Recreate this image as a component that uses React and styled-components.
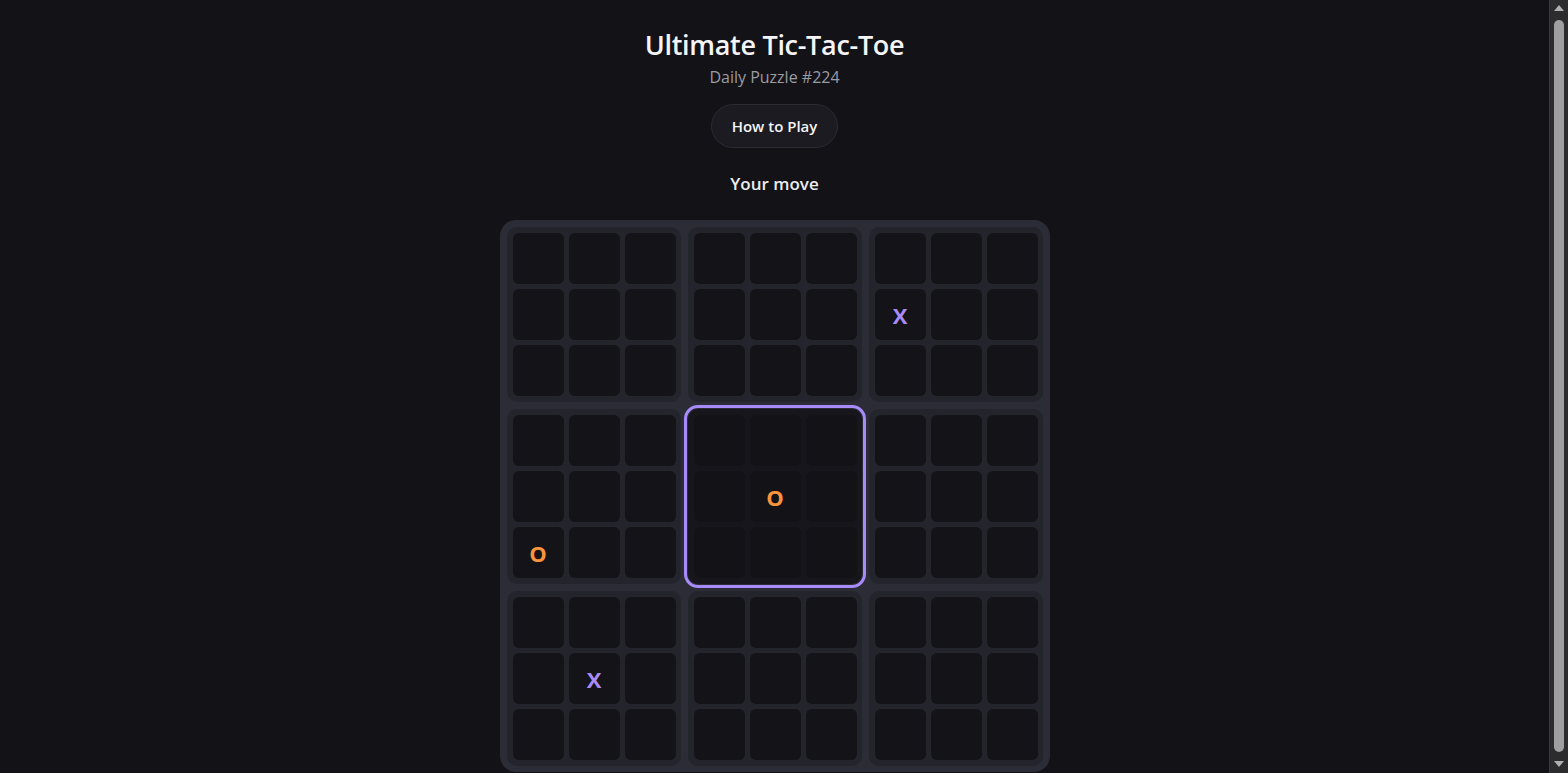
import React from "react";
import styled, { createGlobalStyle } from "styled-components";

const Global = createGlobalStyle`
  html {
    color-scheme: dark;
    background: #121217;
  }
  body {
    margin: 0;
    background: #121217;
    color: #f3f4f6;
    font-family: "Open Sans", "Noto Sans", sans-serif;
    overflow: hidden;
  }
`;

const Shell = styled.div`
  display: flex;
  height: 100vh;
`;

const Main = styled.main`
  flex: 1;
  overflow-y: auto;
  scrollbar-width: none;
  &::-webkit-scrollbar {
    display: none;
  }
`;

const ScrollTrack = styled.div`
  width: 18px;
  flex-shrink: 0;
  border-left: 1px solid #3a3a3d;
  background: #2c2c2e;
  display: flex;
  flex-direction: column;
  align-items: center;
  padding: 5px 0 6px;
  gap: 6px;
`;

const Arrow = styled.div`
  flex-shrink: 0;
  width: 0;
  height: 0;
  border-left: 5px solid transparent;
  border-right: 5px solid transparent;
  ${(p) =>
    p.$down
      ? "border-top: 6px solid #b0b0b0;"
      : "border-bottom: 6px solid #b0b0b0;"}
`;

const Thumb = styled.div`
  flex: 1;
  width: 10px;
  margin: 3px 0;
  border-radius: 5px;
  background: #9f9f9f;
`;

const Page = styled.div`
  display: flex;
  flex-direction: column;
  align-items: center;
  padding: 26px 0 24px;
`;

const Title = styled.h1`
  margin: 0;
  font-size: 27px;
  font-weight: 600;
  letter-spacing: -0.3px;
  color: #f5f5f7;
  line-height: 38px;
`;

const Subtitle = styled.div`
  margin-top: 2px;
  font-size: 16px;
  color: #9a9ba3;
  line-height: 22px;
`;

const HelpButton = styled.button`
  margin-top: 16px;
  height: 44px;
  padding: 0 20px;
  border-radius: 22px;
  border: 1px solid #2a2b33;
  background: #1b1b21;
  color: #f3f4f6;
  font-family: inherit;
  font-size: 15px;
  font-weight: 600;
  cursor: pointer;
`;

const Status = styled.div`
  margin-top: 25px;
  font-size: 17px;
  font-weight: 600;
  color: #ececf0;
  line-height: 22px;
`;

const Board = styled.div`
  margin-top: 25px;
  display: grid;
  grid-template-columns: repeat(3, 174px);
  gap: 7px;
  padding: 7px 7px 6px;
  background: #2b2c35;
  border-radius: 16px;
`;

const SubBoard = styled.div`
  display: grid;
  grid-template-columns: repeat(3, 51px);
  grid-auto-rows: 51px;
  gap: 5px;
  padding: 6px;
  border-radius: 10px;
  background: ${(p) => (p.$active ? "#16161c" : "#23242c")};
  outline: ${(p) => (p.$active ? "3px solid #a78bfa" : "none")};
  outline-offset: 1px;
`;

const Cell = styled.button`
  border: none;
  padding: 0;
  border-radius: 6px;
  background: ${(p) => (p.$active ? "#121217" : "#131318")};
  display: flex;
  align-items: center;
  justify-content: center;
  font-family: "Open Sans", "Noto Sans", sans-serif;
  font-size: 22px;
  font-weight: 700;
  color: ${(p) => (p.$mark === "X" ? "#a78bfa" : "#fb923c")};
  cursor: pointer;
`;

const marks = {
  "2-3": "X",
  "3-6": "O",
  "4-4": "O",
  "6-4": "X",
};

export default function App() {
  return (
    <>
      <Global />
      <Shell>
        <Main>
          <Page>
            <Title>Ultimate Tic-Tac-Toe</Title>
            <Subtitle>Daily Puzzle #224</Subtitle>
            <HelpButton>How to Play</HelpButton>
            <Status>Your move</Status>
            <Board>
              {Array.from({ length: 9 }, (_, b) => (
                <SubBoard key={b} $active={b === 4}>
                  {Array.from({ length: 9 }, (_, c) => {
                    const m = marks[`${b}-${c}`];
                    return (
                      <Cell key={c} $mark={m} $active={b === 4}>
                        {m || ""}
                      </Cell>
                    );
                  })}
                </SubBoard>
              ))}
            </Board>
          </Page>
        </Main>
        <ScrollTrack>
          <Arrow />
          <Thumb />
          <Arrow $down />
        </ScrollTrack>
      </Shell>
    </>
  );
}
